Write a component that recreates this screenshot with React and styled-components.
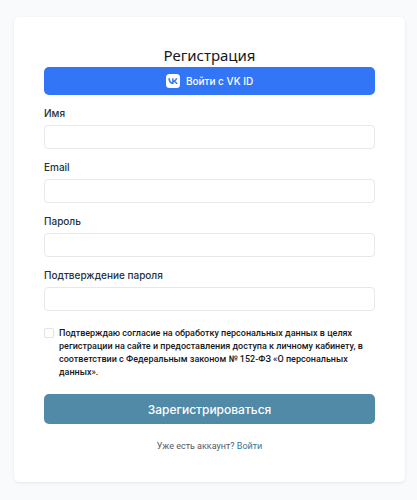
import React from "react";
import styled, { createGlobalStyle } from "styled-components";

const GlobalStyle = createGlobalStyle`
  *, *::before, *::after { box-sizing: border-box; }
  body {
    margin: 0;
    background: #f9fafc;
    color: #15181c;
    font-family: Inter, "Noto Sans", sans-serif;
  }
`;

const Page = styled.main`
  padding: 17px 12px 17px 14px;
`;

const Card = styled.form`
  display: flex;
  flex-direction: column;
  padding: 29px 30px 30px;
  border-radius: 5px;
  background: #fff;
  box-shadow: 0 1px 3px rgba(30, 45, 65, 0.1);
`;

const Title = styled.h1`
  margin: 0 0 3px;
  font-family: "Noto Sans", sans-serif;
  font-size: 15px;
  line-height: 18px;
  font-weight: 400;
  text-align: center;
`;

const Button = styled.button`
  display: flex;
  align-items: center;
  justify-content: center;
  width: 100%;
  border: 0;
  border-radius: 5px;
  color: #fff;
  font-family: inherit;
  font-weight: 500;
  cursor: pointer;
`;

const VkButton = styled(Button)`
  gap: 6px;
  height: 28px;
  background: #3375f7;
  font-size: 10px;
`;

const SubmitButton = styled(Button)`
  height: 30px;
  background: #508aa6;
  font-size: 12px;
`;

const Fields = styled.div`
  display: flex;
  flex-direction: column;
  gap: 12px;
  padding: 12px 0 16px;
`;

const Field = styled.div`
  display: flex;
  flex-direction: column;
  gap: 6px;
`;

const Label = styled.label`
  color: #24323b;
  font-size: 10px;
  line-height: 12px;
  font-weight: 500;
`;

const Input = styled.input`
  width: 100%;
  height: 24px;
  padding: 0 8px;
  border: 1px solid #e6e8ea;
  border-radius: 4px;
  background: #fff;
  font: inherit;
  font-size: 10px;
`;

const Consent = styled.div`
  display: flex;
  align-items: flex-start;
  gap: 5px;
  margin-bottom: 15px;
`;

const Checkbox = styled.input`
  appearance: none;
  flex: none;
  width: 10px;
  height: 10px;
  margin: 1px 0 0;
  border: 1px solid #e2e5e8;
  border-radius: 2px;
  background: #fff;
  &:checked { background: #508aa6; }
`;

const ConsentText = styled.label`
  color: #15181c;
  font-family: Roboto, sans-serif;
  font-size: 9px;
  line-height: 13px;
  font-weight: 500;
`;

const Footer = styled.p`
  margin: 16px 0 0;
  color: #55585d;
  font-family: Roboto, sans-serif;
  font-size: 9px;
  line-height: 12px;
  text-align: center;
`;

const Link = styled.a`
  color: #2f7899;
  text-decoration: none;
`;

const fields = [
  { id: "name", label: "Имя", type: "text" },
  { id: "email", label: "Email", type: "email" },
  { id: "password", label: "Пароль", type: "password" },
  { id: "confirmation", label: "Подтверждение пароля", type: "password" },
];

function VkLogo() {
  return (
    <svg width="14" height="14" viewBox="0 0 28 28" aria-hidden="true">
      <rect width="28" height="28" rx="7" fill="#fff" />
      <path
        d="M14.9 20.2c-6.4 0-10-4.4-10.2-11.7h3.2c.1 5.4 2.5 7.6 4.3 8.1V8.5h3v4.6c1.9-.2 3.800-2.300 4.500-4.600h3c-.5 2.800-2.600 4.900-4.100 5.800 1.500.7 3.900 2.500 4.800 5.900h-3.300c-.7-2.200-2.500-3.900-4.900-4.200v4.200z"
        fill="#3375f7"
      />
    </svg>
  );
}

export default function App() {
  return (
    <>
      <GlobalStyle />
      <Page>
        <Card onSubmit={(event) => event.preventDefault()}>
          <Title>Регистрация</Title>
          <VkButton type="button">
            <VkLogo />
            Войти с VK ID
          </VkButton>
          <Fields>
            {fields.map(({ id, label, type }) => (
              <Field key={id}>
                <Label htmlFor={id}>{label}</Label>
                <Input id={id} name={id} type={type} />
              </Field>
            ))}
          </Fields>
          <Consent>
            <Checkbox id="consent" name="consent" type="checkbox" />
            <ConsentText htmlFor="consent">
              Подтверждаю согласие на обработку персональных данных в целях
              регистрации на сайте и предоставления доступа к личному кабинету, в
              соответствии с Федеральным законом № 152-ФЗ «О персональных данных».
            </ConsentText>
          </Consent>
          <SubmitButton type="submit">Зарегистрироваться</SubmitButton>
          <Footer>
            Уже есть аккаунт? <Link href="#login">Войти</Link>
          </Footer>
        </Card>
      </Page>
    </>
  );
}
